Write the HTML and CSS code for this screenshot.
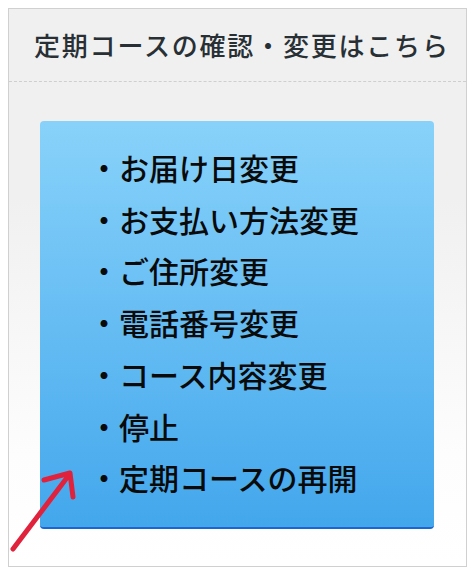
FILE: index.html
```html
<!DOCTYPE html>
<html lang="ja">
<head>
    <meta charset="UTF-8">
    <meta name="viewport" content="width=device-width, initial-scale=1.0">
    <title>定期コースの確認・変更</title>
    <link rel="stylesheet" href="styles.css">
</head>
<body>
    <div class="panel">
        <h2 class="panel-title">定期コースの確認・変更はこちら</h2>
        <div class="panel-body">
            <ul class="menu">
                <li><a href="#">・お届け日変更</a></li>
                <li><a href="#">・お支払い方法変更</a></li>
                <li><a href="#">・ご住所変更</a></li>
                <li><a href="#">・電話番号変更</a></li>
                <li><a href="#">・コース内容変更</a></li>
                <li><a href="#">・停止</a></li>
                <li><a href="#">・定期コースの再開</a></li>
            </ul>
            <svg class="arrow" width="80" height="90" viewBox="0 0 80 90">
                <path d="M4 81 L60 7 M35 12 L61 5 L64 29" fill="none" stroke="#e0223c" stroke-width="5" stroke-linecap="round" stroke-linejoin="round"/>
            </svg>
        </div>
    </div>
</body>
</html>
```

FILE: styles.css
```css
body {
    margin: 8px;
    font-family: "Noto Sans CJK JP", "Noto Sans", sans-serif;
    background: #fff;
}
.panel {
    width: 457px;
    height: 557px;
    border: 1px solid #d0d0d0;
    background: linear-gradient(#f0f0f0 0, #f0f0f0 34%, #fdfdfd 80%, #fff 100%);
    display: flex;
    flex-direction: column;
}
.panel-title {
    margin: 0;
    height: 72px;
    line-height: 72px;
    border-bottom: 1px dashed #cfcfcf;
    padding-left: 25px;
    font-size: 26px;
    font-weight: 500;
    letter-spacing: 1.8px;
    color: #283035;
}
.panel-body {
    position: relative;
    flex: 1;
    padding: 39px 32px 0 31px;
}
.menu {
    list-style: none;
    margin: 0;
    padding: 21px 0 23px 49px;
    border-radius: 4px;
    border-bottom: 2px solid #1c66d2;
    background: linear-gradient(#88d2fa, #43a7ec);
}
.menu li {
    font-size: 30px;
    line-height: 51.7px;
    font-weight: 500;
}
.menu a {
    color: #0a0a0a;
    text-decoration: none;
}
.arrow {
    position: absolute;
    left: 0;
    top: 386px;
}
```
